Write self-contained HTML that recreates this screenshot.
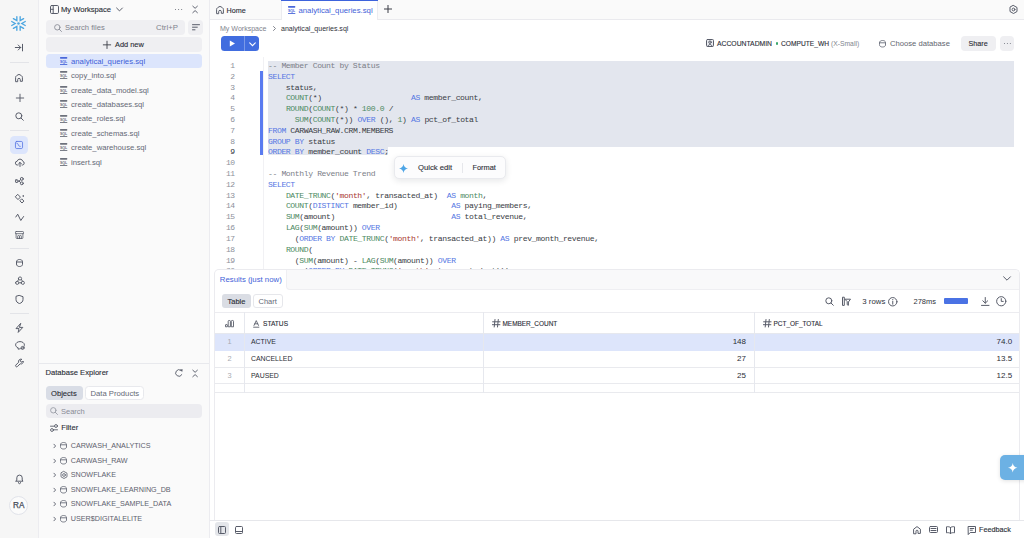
<!DOCTYPE html>
<html><head><meta charset="utf-8">
<style>
*{box-sizing:border-box;margin:0;padding:0}
html,body{width:1024px;height:538px;overflow:hidden;background:#fff;font-family:"Liberation Sans",sans-serif;color:#1e2129}
.a{position:absolute}
svg{display:block;overflow:visible}
.ic{stroke:#595d6a;fill:none;stroke-width:1;stroke-linecap:round;stroke-linejoin:round}
.t{position:absolute;white-space:nowrap;line-height:10px;height:10px;}
.u{transform:scaleY(1.05)}
.md{-webkit-text-stroke:0.12px currentColor}
#rail{left:0;top:0;width:39px;height:538px;background:#f6f6f6;border-right:1px solid #ececf0}
#side{left:39px;top:0;width:171px;height:538px;background:#fafafa;border-right:1px solid #ececf0}
.div{position:absolute;left:10px;width:19px;height:1px;background:#e3e4e8}
.fr{position:absolute;left:46px;width:156px;height:14px}
.fr .t{left:25px;top:2.8px;font-size:7.7px;color:#646875}
.sqlic{position:absolute;left:13.9px;top:3px;width:8px;height:8px}
.tree .t{font-size:7.2px;color:#5d616d}
.code{position:absolute;left:268px;font-family:"Liberation Mono",monospace;font-size:8.1px;letter-spacing:-0.39px;white-space:pre;color:#393c44;line-height:10.82px}
.ln{position:absolute;left:210.5px;width:24px;text-align:right;font-family:"Liberation Mono",monospace;font-size:8px;letter-spacing:-0.5px;color:#8d909a;line-height:10.82px;white-space:pre}
.k{color:#5577e3}.f{color:#4c8a62}.s{color:#a8372f}.c{color:#7b7e87}.n{color:#4c8a62}
</style></head>
<body>
<!-- LEFT RAIL -->
<div id="rail" class="a">
  <!-- snowflake -->
  <svg class="a" style="left:11.3px;top:16.4px" width="15" height="15" viewBox="0 0 15 15"><path d="M14.26 5.50L10.80 7.50L14.26 9.50M9.15 0.64L9.15 4.64L12.61 2.64M2.39 2.64L5.85 4.64L5.85 0.64M0.74 9.50L4.20 7.50L0.74 5.50M5.85 14.36L5.85 10.36L2.39 12.36M12.61 12.36L9.15 10.36L9.15 14.36" stroke="#4ca6e0" stroke-width="1.35" fill="none" stroke-linecap="round" stroke-linejoin="miter"/><circle cx="7.5" cy="7.5" r="1.3" fill="#4ca6e0"/></svg>
  <!-- collapse -->
  <svg class="a ic" style="left:15px;top:44px" width="8" height="7" viewBox="0 0 8 7"><path d="M0.3 3.5h5.4M3.2 1l2.5 2.5-2.5 2.5M7.5 0.3v6.6"/></svg>
  <div class="div" style="top:62px"></div>
  <svg class="a ic" style="left:15px;top:73.5px" width="8" height="8" viewBox="0 0 8 8"><path d="M0.6 7.3V3.4C0.6 2.7 0.9 2.2 1.5 1.8L3 0.8a1.8 1.8 0 0 1 2 0l1.5 1C7.1 2.2 7.4 2.7 7.4 3.4v3.9H5.3V5.6a1.3 1.3 0 0 0-2.6 0v1.7z"/></svg>
  <svg class="a ic" style="left:15.5px;top:93.5px" width="8" height="8" viewBox="0 0 8 8"><path d="M4 0.2v7.4M0.3 4h7.4" style="stroke-width:0.95"/></svg>
  <svg class="a ic" style="left:15px;top:112px" width="9" height="9" viewBox="0 0 9 9"><circle cx="3.8" cy="3.8" r="3"/><path d="M6 6l2.3 2.3"/></svg>
  <div class="div" style="top:130px"></div>
  <div class="a" style="left:9.8px;top:135.8px;width:18.2px;height:17.8px;border-radius:4.5px;background:#dce5fc"></div>
  <svg class="a" style="left:15px;top:141px" width="8" height="8" viewBox="0 0 8 8"><g stroke="#5b78e4" fill="none" stroke-width="0.85" stroke-linecap="round"><rect x="0.45" y="0.45" width="7.1" height="7.1" rx="1.3"/><path d="M1.8 2.2C2.6 2.4 3 2.8 3.3 3.8 3.6 4.8 4 5.3 5.2 5.4"/></g></svg>
  <svg class="a ic" style="left:14.5px;top:158px" width="10" height="9" viewBox="0 0 10 9"><path d="M3 7H2.4A1.9 1.9 0 0 1 2.2 3.2 2.9 2.9 0 0 1 7.8 3.3 1.9 1.9 0 0 1 7.6 7H7M5 8.5V4.5M3.6 5.8L5 4.4l1.4 1.4"/></svg>
  <svg class="a ic" style="left:15px;top:176.6px" width="9" height="8.5" viewBox="0 0 9 8.5"><rect x="0.5" y="2.9" width="2.4" height="2.5" rx="0.5"/><circle cx="6.8" cy="1.9" r="1.45"/><circle cx="6.8" cy="6.3" r="1.45"/><path d="M2.9 4.15h1.2l1.4-1.5M4.1 4.15l1.4 1.4"/></svg>
  <svg class="a ic" style="left:14.5px;top:194px" width="10" height="10" viewBox="0 0 10 10"><path d="M3 0.6L5.4 3.1 3 5.6 0.6 3.1z M7 5.1L8.9 7.05 7 9 5.1 7.05z"/><circle cx="8.1" cy="2" r="0.3"/></svg>
  <svg class="a ic" style="left:14.5px;top:213px" width="10" height="9" viewBox="0 0 10 9"><path d="M0.8 4L2.7 1.2 5.8 7.5 8.6 3.5"/></svg>
  <svg class="a ic" style="left:15px;top:230.5px" width="9" height="8" viewBox="0 0 9 8"><path d="M1.2 0.5h6.6a0.7 0.7 0 0 1 .7.7v1.5H0.5V1.2a0.7 0.7 0 0 1 .7-.7z M1.1 2.7v4.1a0.7 0.7 0 0 0 .7.7h5.4a0.7 0.7 0 0 0 .7-.7V2.7 M2.6 7.4V5.4a0.9 0.9 0 0 1 1.8 0v2 M4.6 7.4V5.4a0.9 0.9 0 0 1 1.8 0v2" style="stroke-width:0.8"/></svg>
  <div class="div" style="top:248px"></div>
  <svg class="a ic" style="left:15.7px;top:259.2px" width="7" height="8" viewBox="0 0 7 8"><path d="M0.5 2.6C0.5 1.3 1.8 0.5 3.5 0.5S6.5 1.3 6.5 2.6V5.4C6.5 6.7 5.2 7.5 3.5 7.5S0.5 6.7 0.5 5.4z M0.5 3h6"/></svg>
  <svg class="a ic" style="left:14.6px;top:276.3px" width="10" height="9" viewBox="0 0 10 9"><path d="M3.4 2.5A1.6 1.6 0 1 1 6.6 2.5 1.6 1.6 0 1 1 3.4 2.5z M0.6 6.8A1.6 1.6 0 1 1 3.8 6.8 1.6 1.6 0 1 1 0.6 6.8z M6.2 6.8A1.6 1.6 0 1 1 9.4 6.8 1.6 1.6 0 1 1 6.2 6.8z M3.8 6.8h2.4M3.6 3.4L2.6 5.3M6.4 3.4l1 1.9" style="stroke-width:0.9"/></svg>
  <svg class="a ic" style="left:15px;top:295px" width="9" height="9" viewBox="0 0 9 9"><path d="M4.5 0.5L8 1.7v2.8c0 2.1-1.5 3.5-3.5 4C2.5 8 1 6.6 1 4.5V1.7z"/></svg>
  <div class="div" style="top:313px"></div>
  <svg class="a ic" style="left:15px;top:322.8px" width="9" height="10" viewBox="0 0 9 10"><path d="M5.5 0.6L1 5.6h3l-0.8 3.8 4.6-5H4.8z"/></svg>
  <svg class="a ic" style="left:14.5px;top:341px" width="10" height="9" viewBox="0 0 10 9"><path d="M5.3 7.6C4.6 8 3.8 8.2 3 8.1L3.2 6.8C1.6 6.3.6 5.2.6 3.9.6 2 2.6.6 5 .6S9.4 2 9.4 3.9c0 .4-.1.8-.2 1.1"/><circle cx="7.6" cy="6.9" r="1.5"/><path d="M6.6 7.9l2-2"/></svg>
  <svg class="a ic" style="left:14.5px;top:358px" width="10" height="10" viewBox="0 0 10 10"><path d="M6.5 1.2a2.3 2.3 0 0 0-2.8 3L0.9 7a1 1 0 0 0 1.5 1.5L5.2 5.8a2.3 2.3 0 0 0 3-2.8L7 4.2 5.8 3.8 5.4 2.6z"/></svg>
  <svg class="a ic" style="left:15px;top:474px" width="9" height="10" viewBox="0 0 9 10"><path d="M1 7.2h7L7.2 6V3.8a2.7 2.7 0 0 0-5.4 0V6z M3.4 8.6a1.1 1.1 0 0 0 2.2 0"/></svg>
  <div class="a" style="left:9.2px;top:496px;width:19px;height:19px;border-radius:50%;border:1px solid #e1e3ea;background:#fbfbfb"></div>
  <div class="t md" style="left:9.2px;width:19px;top:500.5px;text-align:center;font-size:8.2px;color:#454a58;-webkit-text-stroke:0.25px #454a58">RA</div>
</div>

<!-- SIDEBAR -->
<div id="side" class="a"></div>
<svg class="a ic" style="left:49.5px;top:5px" width="9" height="9" viewBox="0 0 9 9"><rect x="0.5" y="0.5" width="8" height="8" rx="1.2"/><path d="M3.2 0.5v8M0.6 4.3h2.6"/></svg>
<div class="t md" style="left:61px;top:5px;font-size:7.6px;color:#2b2e37">My Workspace</div>
<svg class="a ic" style="left:116px;top:6.5px" width="7" height="5" viewBox="0 0 7 5"><path d="M0.6 1l2.9 2.9L6.4 1"/></svg>
<div class="a" style="left:174.7px;top:8.8px;width:1.35px;height:1.35px;border-radius:50%;background:#5a5e68;box-shadow:3.1px 0 #5a5e68,6.2px 0 #5a5e68"></div>
<svg class="a ic" style="left:192.3px;top:5px" width="6" height="9" viewBox="0 0 6 9"><path d="M0.8 1.2l2.3 2.1 2.3-2.1M0.8 7.7l2.3-2.1 2.3 2.1" style="stroke-width:0.95"/></svg>

<div class="a" style="left:46px;top:20px;width:139px;height:14.5px;border-radius:4px;background:#efeff2"></div>
<svg class="a" style="left:54px;top:23.5px" width="8" height="8" viewBox="0 0 8 8"><g stroke="#8b8e98" fill="none" stroke-width="0.9" stroke-linecap="round"><circle cx="3.3" cy="3.3" r="2.7"/><path d="M5.3 5.3L7.5 7.5"/></g></svg>
<div class="t" style="left:65px;top:23px;font-size:7.6px;color:#80838d">Search files</div>
<div class="t" style="left:156px;top:23px;font-size:7.8px;color:#80838d">Ctrl+P</div>
<div class="a" style="left:188px;top:20px;width:14.5px;height:14.5px;border-radius:4px;background:#efeff2"></div>
<svg class="a ic" style="left:191.5px;top:24px" width="8" height="7" viewBox="0 0 8 7"><path d="M0.5 0.7h7M0.5 3.2h4.8M0.5 5.8h2.5"/></svg>

<div class="a" style="left:46px;top:37px;width:156px;height:14.5px;border-radius:4px;background:#efeff2"></div>
<svg class="a" style="left:103px;top:40.5px" width="8" height="8" viewBox="0 0 8 8"><g stroke="#3a3d46" stroke-width="0.9" stroke-linecap="round"><path d="M4 0.2v7.3M0.3 3.85h7.4"/></g></svg>
<div class="t md" style="left:115px;top:40px;font-size:7.4px;color:#2b2e37">Add new</div>

<div class="fr" style="top:54px;background:#dce5fc;border-radius:3.5px"><svg class="sqlic" viewBox="0 0 8 8"><rect x="0" y="0" width="7.3" height="1.7" rx="0.6" fill="#4a68da"/><rect x="0" y="7.0" width="7.3" height="0.9" fill="#4a68da"/><text x="3.65" y="5.8" text-anchor="middle" font-size="3.7" font-family="Liberation Sans" font-weight="700" fill="#4a68da" textLength="7.3" lengthAdjust="spacingAndGlyphs">SQL</text></svg><div class="t" style="color:#3f5fd8;font-size:7.75px">analytical_queries.sql</div></div>
<div class="fr" style="top:68.4px"><svg class="sqlic" viewBox="0 0 8 8"><rect x="0" y="0" width="7.3" height="1.7" rx="0.6" fill="#6d717c"/><rect x="0" y="7.0" width="7.3" height="0.9" fill="#6d717c"/><text x="3.65" y="5.8" text-anchor="middle" font-size="3.7" font-family="Liberation Sans" font-weight="700" fill="#6d717c" textLength="7.3" lengthAdjust="spacingAndGlyphs">SQL</text></svg><div class="t">copy_into.sql</div></div>
<div class="fr" style="top:82.8px"><svg class="sqlic" viewBox="0 0 8 8"><rect x="0" y="0" width="7.3" height="1.7" rx="0.6" fill="#6d717c"/><rect x="0" y="7.0" width="7.3" height="0.9" fill="#6d717c"/><text x="3.65" y="5.8" text-anchor="middle" font-size="3.7" font-family="Liberation Sans" font-weight="700" fill="#6d717c" textLength="7.3" lengthAdjust="spacingAndGlyphs">SQL</text></svg><div class="t">create_data_model.sql</div></div>
<div class="fr" style="top:97.2px"><svg class="sqlic" viewBox="0 0 8 8"><rect x="0" y="0" width="7.3" height="1.7" rx="0.6" fill="#6d717c"/><rect x="0" y="7.0" width="7.3" height="0.9" fill="#6d717c"/><text x="3.65" y="5.8" text-anchor="middle" font-size="3.7" font-family="Liberation Sans" font-weight="700" fill="#6d717c" textLength="7.3" lengthAdjust="spacingAndGlyphs">SQL</text></svg><div class="t">create_databases.sql</div></div>
<div class="fr" style="top:111.6px"><svg class="sqlic" viewBox="0 0 8 8"><rect x="0" y="0" width="7.3" height="1.7" rx="0.6" fill="#6d717c"/><rect x="0" y="7.0" width="7.3" height="0.9" fill="#6d717c"/><text x="3.65" y="5.8" text-anchor="middle" font-size="3.7" font-family="Liberation Sans" font-weight="700" fill="#6d717c" textLength="7.3" lengthAdjust="spacingAndGlyphs">SQL</text></svg><div class="t">create_roles.sql</div></div>
<div class="fr" style="top:126px"><svg class="sqlic" viewBox="0 0 8 8"><rect x="0" y="0" width="7.3" height="1.7" rx="0.6" fill="#6d717c"/><rect x="0" y="7.0" width="7.3" height="0.9" fill="#6d717c"/><text x="3.65" y="5.8" text-anchor="middle" font-size="3.7" font-family="Liberation Sans" font-weight="700" fill="#6d717c" textLength="7.3" lengthAdjust="spacingAndGlyphs">SQL</text></svg><div class="t">create_schemas.sql</div></div>
<div class="fr" style="top:140.4px"><svg class="sqlic" viewBox="0 0 8 8"><rect x="0" y="0" width="7.3" height="1.7" rx="0.6" fill="#6d717c"/><rect x="0" y="7.0" width="7.3" height="0.9" fill="#6d717c"/><text x="3.65" y="5.8" text-anchor="middle" font-size="3.7" font-family="Liberation Sans" font-weight="700" fill="#6d717c" textLength="7.3" lengthAdjust="spacingAndGlyphs">SQL</text></svg><div class="t">create_warehouse.sql</div></div>
<div class="fr" style="top:154.8px"><svg class="sqlic" viewBox="0 0 8 8"><rect x="0" y="0" width="7.3" height="1.7" rx="0.6" fill="#6d717c"/><rect x="0" y="7.0" width="7.3" height="0.9" fill="#6d717c"/><text x="3.65" y="5.8" text-anchor="middle" font-size="3.7" font-family="Liberation Sans" font-weight="700" fill="#6d717c" textLength="7.3" lengthAdjust="spacingAndGlyphs">SQL</text></svg><div class="t">insert.sql</div></div>

<!-- DATABASE EXPLORER -->
<div class="a" style="left:39px;top:363px;width:170px;height:1px;background:#e8e9ed"></div>
<div class="t md" style="left:45.5px;top:368px;font-size:7.6px;color:#2b2e37">Database Explorer</div>
<svg class="a ic" style="left:174.6px;top:369px" width="8" height="8" viewBox="0 0 8 8"><path d="M6.86 5.65A3.3 3.3 0 1 1 5.9 1.3" style="stroke-width:0.95"/><path d="M4.9 0.6L7.7 0.3 7.2 3z" style="fill:#595d6a;stroke:none"/></svg>
<svg class="a ic" style="left:192.3px;top:368.5px" width="6" height="9" viewBox="0 0 6 9"><path d="M0.8 1.2l2.3 2.1 2.3-2.1M0.8 7.7l2.3-2.1 2.3 2.1" style="stroke-width:0.95"/></svg>
<div class="a" style="left:46px;top:386px;width:36.5px;height:14px;border-radius:3.5px;background:#d9dde6"></div>
<div class="t md" style="left:51px;top:388.5px;font-size:7.6px;color:#2b2e37">Objects</div>
<div class="a" style="left:84.8px;top:386px;width:59.4px;height:14px;border-radius:3.5px;background:#fff;border:1px solid #e8e9ed"></div>
<div class="t" style="left:90.5px;top:388.5px;font-size:7.7px;color:#656976">Data Products</div>
<div class="a" style="left:46px;top:404px;width:156px;height:14px;border-radius:4px;background:#ececf0"></div>
<svg class="a" style="left:50px;top:407px" width="8" height="8" viewBox="0 0 8 8"><g stroke="#9a9da6" fill="none" stroke-width="0.9" stroke-linecap="round"><circle cx="3.3" cy="3.3" r="2.7"/><path d="M5.3 5.3L7.5 7.5"/></g></svg>
<div class="t" style="left:61px;top:406.5px;font-size:7.5px;color:#8a8d97">Search</div>
<svg class="a ic" style="left:50px;top:424px" width="8" height="8" viewBox="0 0 8 8"><path d="M0.5 2.2h3.8M3.8 5.8h3.7" style="stroke-width:0.9"/><circle cx="6" cy="2" r="1.45" style="stroke-width:0.9"/><circle cx="2" cy="6" r="1.45" style="stroke-width:0.9"/></svg>
<div class="t md" style="left:61.3px;top:423.2px;font-size:7.6px;color:#2b2e37">Filter</div>

<div class="tree">
<svg class="a ic" style="left:52.5px;top:443px" width="4" height="6" viewBox="0 0 4 6"><path d="M0.9 1.2l1.7 1.8-1.7 1.8" stroke="#6a6e7a"/></svg>
<svg class="a ic" style="left:60px;top:442.1px;stroke:#6a6e7a;stroke-width:0.9" width="7" height="7.5" viewBox="0 0 7 7.5"><path d="M0.5 2.5C0.5 1.2 1.8 0.5 3.5 0.5S6.5 1.2 6.5 2.5V5C6.5 6.3 5.2 7 3.5 7S0.5 6.3 0.5 5z M0.5 2.8h6"/></svg>
<div class="t" style="left:70.8px;top:441px">CARWASH_ANALYTICS</div>
<svg class="a ic" style="left:52.5px;top:457.5px" width="4" height="6" viewBox="0 0 4 6"><path d="M0.9 1.2l1.7 1.8-1.7 1.8" stroke="#6a6e7a"/></svg>
<svg class="a ic" style="left:60px;top:456.6px;stroke:#6a6e7a;stroke-width:0.9" width="7" height="7.5" viewBox="0 0 7 7.5"><path d="M0.5 2.5C0.5 1.2 1.8 0.5 3.5 0.5S6.5 1.2 6.5 2.5V5C6.5 6.3 5.2 7 3.5 7S0.5 6.3 0.5 5z M0.5 2.8h6"/></svg>
<div class="t" style="left:70.8px;top:455.5px">CARWASH_RAW</div>
<svg class="a ic" style="left:52.5px;top:472px" width="4" height="6" viewBox="0 0 4 6"><path d="M0.9 1.2l1.7 1.8-1.7 1.8" stroke="#6a6e7a"/></svg>
<svg class="a ic" style="left:60px;top:470.5px;stroke:#6a6e7a;stroke-width:0.9" width="8" height="8" viewBox="0 0 8 8"><path d="M4 0.5L7 2.2V5.8L4 7.5 1 5.8V2.2z"/><circle cx="4" cy="4" r="1.4"/></svg>
<div class="t" style="left:70.8px;top:470px">SNOWFLAKE</div>
<svg class="a ic" style="left:52.5px;top:486.5px" width="4" height="6" viewBox="0 0 4 6"><path d="M0.9 1.2l1.7 1.8-1.7 1.8" stroke="#6a6e7a"/></svg>
<svg class="a ic" style="left:60px;top:485.6px;stroke:#6a6e7a;stroke-width:0.9" width="7" height="7.5" viewBox="0 0 7 7.5"><path d="M0.5 2.5C0.5 1.2 1.8 0.5 3.5 0.5S6.5 1.2 6.5 2.5V5C6.5 6.3 5.2 7 3.5 7S0.5 6.3 0.5 5z M0.5 2.8h6"/></svg>
<div class="t" style="left:70.8px;top:484.5px">SNOWFLAKE_LEARNING_DB</div>
<svg class="a ic" style="left:52.5px;top:501px" width="4" height="6" viewBox="0 0 4 6"><path d="M0.9 1.2l1.7 1.8-1.7 1.8" stroke="#6a6e7a"/></svg>
<svg class="a ic" style="left:60px;top:500.1px;stroke:#6a6e7a;stroke-width:0.9" width="7" height="7.5" viewBox="0 0 7 7.5"><path d="M0.5 2.5C0.5 1.2 1.8 0.5 3.5 0.5S6.5 1.2 6.5 2.5V5C6.5 6.3 5.2 7 3.5 7S0.5 6.3 0.5 5z M0.5 2.8h6"/></svg>
<div class="t" style="left:70.8px;top:499px">SNOWFLAKE_SAMPLE_DATA</div>
<svg class="a ic" style="left:52.5px;top:515.5px" width="4" height="6" viewBox="0 0 4 6"><path d="M0.9 1.2l1.7 1.8-1.7 1.8" stroke="#6a6e7a"/></svg>
<svg class="a ic" style="left:60px;top:514.6px;stroke:#6a6e7a;stroke-width:0.9" width="7" height="7.5" viewBox="0 0 7 7.5"><path d="M0.5 2.5C0.5 1.2 1.8 0.5 3.5 0.5S6.5 1.2 6.5 2.5V5C6.5 6.3 5.2 7 3.5 7S0.5 6.3 0.5 5z M0.5 2.8h6"/></svg>
<div class="t" style="left:70.8px;top:513.5px">USER$DIGITALELITE</div>
</div>

<!-- MAIN -->
<!-- TABBAR -->
<div class="a" style="left:210px;top:0;width:814px;height:20px;background:#fafafa;border-bottom:1px solid #eaeaee"></div>
<svg class="a ic" style="left:215.5px;top:6px" width="8" height="8" viewBox="0 0 8 8"><path d="M0.6 7.3V3.4C0.6 2.7 0.9 2.2 1.5 1.8L3 0.8a1.8 1.8 0 0 1 2 0l1.5 1C7.1 2.2 7.4 2.7 7.4 3.4v3.9H5.3V5.6a1.3 1.3 0 0 0-2.6 0v1.7z"/></svg>
<div class="t md" style="left:226.5px;top:5.7px;font-size:7.2px;color:#2b2e37">Home</div>
<div class="a" style="left:281px;top:0;width:97px;height:20px;background:#fff;border-left:1px solid #ececf0;border-right:1px solid #ececf0"></div>
<div class="a" style="left:281px;top:0;width:97px;height:1.2px;background:#3d63dc"></div>
<svg class="a" style="left:287.5px;top:6px" width="8" height="8" viewBox="0 0 8 8"><rect x="0" y="0" width="7.3" height="1.7" rx="0.6" fill="#4a68da"/><rect x="0" y="7.0" width="7.3" height="0.9" fill="#4a68da"/><text x="3.65" y="5.8" text-anchor="middle" font-size="3.7" font-family="Liberation Sans" font-weight="700" fill="#4a68da" textLength="7.3" lengthAdjust="spacingAndGlyphs">SQL</text></svg>
<div class="t" style="left:298.5px;top:5.9px;font-size:7.75px;color:#3f5fd8">analytical_queries.sql</div>
<svg class="a ic" style="left:383.5px;top:5px" width="8" height="8" viewBox="0 0 8 8"><path d="M4 0.4v7.2M0.4 4h7.2" stroke="#3a3d46"/></svg>
<svg class="a ic" style="left:1008.5px;top:5px" width="9" height="9" viewBox="0 0 9 9"><path d="M4.5 0.5l3.5 2v4l-3.5 2-3.5-2v-4z"/><circle cx="4.5" cy="4.5" r="1.4"/></svg>

<!-- breadcrumb -->
<div class="t" style="left:220px;top:23.5px;font-size:7.05px;color:#80838d">My Workspace</div>
<svg class="a ic" style="left:273px;top:25.5px" width="3" height="5" viewBox="0 0 3 5"><path d="M0.5 0.5l2 2-2 2" stroke="#80838d"/></svg>
<div class="t" style="left:281px;top:23.5px;font-size:7.05px;color:#2f323a">analytical_queries.sql</div>

<!-- run button -->
<div class="a" style="left:220.6px;top:36.1px;width:38.5px;height:14.7px;border-radius:3.5px;background:#416ddf"></div>
<div class="a" style="left:244px;top:36.1px;width:0.7px;height:14.7px;background:rgba(255,255,255,0.3)"></div>
<svg class="a" style="left:229.2px;top:40.1px" width="7" height="7" viewBox="0 0 7 7"><path d="M0.8 0.4L6 3.45 0.8 6.5z" fill="#fff"/></svg>
<svg class="a" style="left:249px;top:41.5px" width="7" height="5" viewBox="0 0 7 5"><path d="M0.7 0.8l2.8 2.8 2.8-2.8" stroke="#fff" fill="none" stroke-width="1.1" stroke-linecap="round"/></svg>

<!-- right toolbar -->
<svg class="a ic" style="left:705.8px;top:39.4px" width="8" height="8" viewBox="0 0 8 8"><rect x="0.5" y="0.5" width="7" height="7" rx="1" style="fill:#eceef2"/><circle cx="4" cy="3.2" r="1.25"/><path d="M1.9 7.4c.3-1.3 1-1.9 2.1-1.9s1.8.6 2.1 1.9"/></svg>
<div class="t md" style="left:717px;top:39px;font-size:6.8px;color:#2b2e37">ACCOUNTADMIN</div>
<div class="a" style="left:776.3px;top:42.4px;width:2.2px;height:2.2px;border-radius:50%;background:#3aa76d"></div>
<div class="t md" style="left:781px;top:39px;font-size:6.65px;color:#2b2e37">COMPUTE_WH</div>
<div class="t" style="left:831px;top:39px;font-size:6.75px;color:#80838d">(X-Small)</div>
<svg class="a ic" style="left:879px;top:39.6px;stroke:#6a6e7a;stroke-width:0.9" width="7" height="7.5" viewBox="0 0 7 7.5"><path d="M0.5 2.5C0.5 1.2 1.8 0.5 3.5 0.5S6.5 1.2 6.5 2.5V5C6.5 6.3 5.2 7 3.5 7S0.5 6.3 0.5 5z M0.5 2.8h6"/></svg>
<div class="t" style="left:890px;top:39px;font-size:7.65px;color:#62666f">Choose database</div>
<div class="a" style="left:961px;top:36.4px;width:35px;height:14.2px;border-radius:4px;background:#efeff2"></div>
<div class="t md" style="left:968.5px;top:39px;font-size:7.2px;color:#2b2e37">Share</div>
<div class="a" style="left:999.5px;top:36.4px;width:14.5px;height:14.2px;border-radius:4px;background:#efeff2"></div>
<div class="a" style="left:1003.5px;top:43px;width:1.3px;height:1.3px;border-radius:50%;background:#6a6e78;box-shadow:2.9px 0 #6a6e78,5.8px 0 #6a6e78"></div>

<!-- EDITOR -->
<div class="a" style="left:262.5px;top:57px;width:0.6px;height:212px;background:#f1f1f4"></div>
<div class="a" style="left:268px;top:60.8px;width:746px;height:86.4px;background:#e3e6ee"></div>
<div class="a" style="left:268px;top:147px;width:120.2px;height:8px;background:#e3e6ee"></div>
<div class="a" style="left:260.2px;top:71px;width:2.8px;height:84.2px;background:#5a7bf0"></div>

<div class="ln" style="top:60.9px">1
2
3
4
5
6
7
8
<span style="color:#30333b">9</span>
10
11
12
13
14
15
16
17
18
19
20</div>

<div class="code" style="top:60.9px"><span class="c">-- Member Count by Status</span>
<span class="k">SELECT</span>
    status,
    <span class="f">COUNT</span>(*)                    <span class="k">AS</span> member_count,
    <span class="f">ROUND</span>(<span class="f">COUNT</span>(*) * <span class="n">100.0</span> /
      <span class="f">SUM</span>(<span class="f">COUNT</span>(*)) <span class="k">OVER</span> (), <span class="n">1</span>) <span class="k">AS</span> pct_of_total
<span class="k">FROM</span> CARWASH_RAW.CRM.MEMBERS
<span class="k">GROUP BY</span> status
<span class="k">ORDER BY</span> member_count <span class="k">DESC</span>;

<span class="c">-- Monthly Revenue Trend</span>
<span class="k">SELECT</span>
    <span class="f">DATE_TRUNC</span>(<span class="s">'month'</span>, transacted_at)  <span class="k">AS</span> <span class="f">month</span>,
    <span class="f">COUNT</span>(<span class="k">DISTINCT</span> member_id)            <span class="k">AS</span> paying_members,
    <span class="f">SUM</span>(amount)                          <span class="k">AS</span> total_revenue,
    <span class="f">LAG</span>(<span class="f">SUM</span>(amount)) <span class="k">OVER</span>
      (<span class="k">ORDER BY</span> <span class="f">DATE_TRUNC</span>(<span class="s">'month'</span>, transacted_at)) <span class="k">AS</span> prev_month_revenue,
    <span class="f">ROUND</span>(
      (<span class="f">SUM</span>(amount) - <span class="f">LAG</span>(<span class="f">SUM</span>(amount)) <span class="k">OVER</span>
        (<span class="k">ORDER BY</span> <span class="f">DATE_TRUNC</span>(<span class="s">'month'</span>, transacted_at)))</div>

<!-- Quick edit popup -->
<div class="a" style="left:393.5px;top:156px;width:112.5px;height:23.2px;border-radius:5px;background:#fcfcfd;border:0.6px solid #e9eaee;box-shadow:0 2px 6px rgba(20,25,40,0.10)"></div>
<svg class="a" style="left:399px;top:163.5px" width="9" height="9" viewBox="0 0 9 9"><path d="M4.5 0C4.9 2.7 6.3 4.1 9 4.5 6.3 4.9 4.9 6.3 4.5 9 4.1 6.3 2.7 4.9 0 4.5 2.7 4.1 4.1 2.7 4.5 0z" fill="#4ea5e6"/></svg>
<div class="t md" style="left:418px;top:163px;font-size:7.7px;color:#2f323a">Quick edit</div>
<div class="a" style="left:462.2px;top:163px;width:0.7px;height:9.5px;background:#e6e7eb"></div>
<div class="t md" style="left:472.5px;top:163px;font-size:7.4px;color:#2f323a">Format</div>

<!-- RESULTS PANEL -->
<div class="a" style="left:214px;top:269.4px;width:806px;height:251px;background:#fff;border:1px solid #ebebef;border-bottom:none;border-radius:5px 5px 0 0;overflow:hidden">
  <div class="a" style="left:71px;top:-1px;width:740px;height:21px;background:#f9f9fa;border-bottom:1px solid #efeff2;border-left:1px solid #efeff2;border-bottom-left-radius:4px"></div>
</div>
<div class="t" style="left:219.8px;top:274.5px;font-size:7.8px;color:#3f5fd8">Results (just now)</div>
<svg class="a ic" style="left:1003px;top:276px" width="8" height="5" viewBox="0 0 8 5"><path d="M0.6 0.8l3.4 3.4 3.4-3.4"/></svg>

<div class="a" style="left:222.3px;top:294px;width:28.5px;height:14px;border-radius:3px;background:#dadde4"></div>
<div class="t md" style="left:227.5px;top:296.5px;font-size:7.5px;color:#2b2e37">Table</div>
<div class="a" style="left:253.3px;top:294px;width:30px;height:14px;border-radius:3px;background:#fff;border:1px solid #e6e7eb"></div>
<div class="t" style="left:258.5px;top:296.5px;font-size:7.5px;color:#656976">Chart</div>

<svg class="a ic" style="left:824.5px;top:296.5px" width="9" height="9" viewBox="0 0 9 9"><circle cx="3.8" cy="3.8" r="3"/><path d="M6 6l2.3 2.3"/></svg>
<svg class="a ic" style="left:841.5px;top:296.5px" width="9" height="9" viewBox="0 0 9 9"><path d="M0.5 0.6v7.8h1.8V0.6zM3.2 2.2h5.3L6.4 5v3.3L5.2 7.7V5z"/></svg>
<div class="t" style="left:862.3px;top:296.5px;font-size:7.85px;color:#30333b">3 rows</div>
<svg class="a ic" style="left:888px;top:296.5px" width="9.5" height="9.5" viewBox="0 0 9.5 9.5"><circle cx="4.75" cy="4.75" r="4.2"/><path d="M4.75 4.2v3M4.75 2.5v0.2"/></svg>
<div class="t" style="left:913.5px;top:296.5px;font-size:7.5px;color:#30333b">278ms</div>
<div class="a" style="left:943.6px;top:297.9px;width:24.7px;height:6px;border-radius:1px;background:#4a72e4"></div>
<svg class="a ic" style="left:980.5px;top:296.5px" width="8.5" height="9" viewBox="0 0 8.5 9"><path d="M4.25 0.5v5.5M1.8 3.8l2.45 2.4 2.45-2.4M0.5 8.4h7.5"/></svg>
<svg class="a ic" style="left:996px;top:296px" width="10.5" height="10.5" viewBox="0 0 10.5 10.5"><circle cx="5.25" cy="5.25" r="4.6"/><path d="M5.25 2.6v2.8h2"/></svg>

<!-- table -->
<div class="a" style="left:215px;top:312px;width:804px;height:1px;background:#ececf0"></div>
<div class="a" style="left:215px;top:333px;width:804px;height:17.8px;background:#dde5fb"></div>
<div class="a" style="left:215px;top:332.6px;width:804px;height:0.8px;background:#e6e8ee"></div>
<div class="a" style="left:215px;top:367px;width:804px;height:0.8px;background:#e9eaee"></div>
<div class="a" style="left:215px;top:383.2px;width:804px;height:0.8px;background:#e9eaee"></div>
<div class="a" style="left:215px;top:392.2px;width:804px;height:0.8px;background:#e9eaee"></div>
<div class="a" style="left:243.8px;top:312px;width:0.8px;height:80.5px;background:#e6e8ee"></div>
<div class="a" style="left:483px;top:312px;width:0.8px;height:80.5px;background:#e6e8ee"></div>
<div class="a" style="left:754px;top:312px;width:0.8px;height:80.5px;background:#e6e8ee"></div>

<svg class="a ic" style="left:225px;top:320px" width="9.5" height="7" viewBox="0 0 9.5 7"><path d="M0.5 6.4V5a0.5 0.5 0 0 1 .5-.5h.8a0.5 0.5 0 0 1 .5.5v1.4z M3.2 6.4V1.3a0.8 0.8 0 0 1 .8-.8h.6a0.8 0.8 0 0 1 .8.8v5.1z M6.3 6.4V1.3a0.8 0.8 0 0 1 .8-.8h.6a0.8 0.8 0 0 1 .8.8v5.1z" style="stroke-width:0.9"/></svg>
<svg class="a ic" style="left:253px;top:319.5px" width="6.5" height="8" viewBox="0 0 6.5 8"><path d="M1 5.4L3.25 0.6l2.25 4.8M1.8 3.8h2.9M0.6 7.2h5.3" style="stroke-width:0.9"/></svg>
<div class="t md" style="left:263px;top:318.5px;font-size:6.6px;color:#2b2e37">STATUS</div>
<svg class="a ic" style="left:491.5px;top:318.5px" width="8.5" height="8.5" viewBox="0 0 8.5 8.5"><path d="M3 0.5l-0.8 7.5M6.3 0.5l-0.8 7.5M0.6 2.8h7.5M0.4 5.7h7.5"/></svg>
<div class="t md" style="left:502.5px;top:318.5px;font-size:6.45px;color:#2b2e37">MEMBER_COUNT</div>
<svg class="a ic" style="left:762.5px;top:318.5px" width="8.5" height="8.5" viewBox="0 0 8.5 8.5"><path d="M3 0.5l-0.8 7.5M6.3 0.5l-0.8 7.5M0.6 2.8h7.5M0.4 5.7h7.5"/></svg>
<div class="t md" style="left:773.5px;top:318.5px;font-size:6.45px;color:#2b2e37">PCT_OF_TOTAL</div>

<div class="t" style="left:215px;width:29px;text-align:center;top:336.5px;font-size:7.4px;color:#a7aab2">1</div>
<div class="t" style="left:215px;width:29px;text-align:center;top:353.5px;font-size:7.4px;color:#a7aab2">2</div>
<div class="t" style="left:215px;width:29px;text-align:center;top:370.8px;font-size:7.4px;color:#a7aab2">3</div>
<div class="t" style="left:251px;top:336.5px;font-size:6.9px;color:#2b2e37">ACTIVE</div>
<div class="t" style="left:251px;top:353.5px;font-size:6.9px;color:#2b2e37">CANCELLED</div>
<div class="t" style="left:251px;top:370.8px;font-size:6.9px;color:#2b2e37">PAUSED</div>
<div class="t" style="left:600px;width:146px;text-align:right;top:336.5px;font-size:8px;color:#2b2e37">148</div>
<div class="t" style="left:600px;width:146px;text-align:right;top:353.5px;font-size:8px;color:#2b2e37">27</div>
<div class="t" style="left:600px;width:146px;text-align:right;top:370.8px;font-size:8px;color:#2b2e37">25</div>
<div class="t" style="left:900px;width:112.2px;text-align:right;top:336.5px;font-size:8px;color:#2b2e37">74.0</div>
<div class="t" style="left:900px;width:112.2px;text-align:right;top:353.5px;font-size:8px;color:#2b2e37">13.5</div>
<div class="t" style="left:900px;width:112.2px;text-align:right;top:370.8px;font-size:8px;color:#2b2e37">12.5</div>

<!-- cortex button -->
<div class="a" style="left:1000px;top:455px;width:30px;height:24.7px;border-radius:5px;background:#6cb1e4;box-shadow:0 1px 4px rgba(0,0,0,0.12)"></div>
<svg class="a" style="left:1007.5px;top:463px" width="9.5" height="9.5" viewBox="0 0 9 9"><path d="M4.5 0C4.9 2.7 6.3 4.1 9 4.5 6.3 4.9 4.9 6.3 4.5 9 4.1 6.3 2.7 4.9 0 4.5 2.7 4.1 4.1 2.7 4.5 0z" fill="#fff"/></svg>

<!-- FOOTER -->
<div class="a" style="left:210px;top:520px;width:814px;height:18px;background:#fff;border-top:1px solid #e6e7eb"></div>
<div class="a" style="left:215px;top:522.3px;width:13.7px;height:14px;border-radius:3px;background:#e4e6ea"></div>
<svg class="a ic" style="left:218px;top:525.5px" width="8" height="8" viewBox="0 0 8 8"><rect x="0.5" y="0.5" width="7" height="7" rx="1"/><path d="M2.8 0.5v7"/></svg>
<svg class="a ic" style="left:234.5px;top:525.5px" width="8" height="8" viewBox="0 0 8 8"><rect x="0.5" y="0.5" width="7" height="7" rx="1"/><path d="M0.5 5.5h7"/></svg>
<svg class="a ic" style="left:913px;top:525.5px" width="8" height="8" viewBox="0 0 8 8"><path d="M0.6 7.4V3.2L4 0.6l3.4 2.6v4.2H5V5.2a1 1 0 0 0-2 0v2.2z"/></svg>
<svg class="a ic" style="left:929px;top:526px" width="9" height="7" viewBox="0 0 9 7"><rect x="0.5" y="0.5" width="8" height="6" rx="1"/><path d="M2 2.5h5M2 4.5h5"/></svg>
<svg class="a ic" style="left:945.5px;top:525.5px" width="9" height="8" viewBox="0 0 9 8"><path d="M4.5 1.5C3.5 0.7 2 0.5 0.5 0.8v6c1.5-.3 3-.1 4 .7 1-.8 2.5-1 4-.7v-6c-1.5-.3-3-.1-4 .7zM4.5 1.5v6"/></svg>
<svg class="a ic" style="left:968px;top:525.5px" width="8" height="9" viewBox="0 0 8 9"><path d="M0.5 0.5h7v6H2.2L0.5 8.3z M2.2 2.5h3.6M2.2 4.2h2.2"/></svg>
<div class="t md" style="left:979px;top:524.5px;font-size:7.25px;color:#2b2e37">Feedback</div>

</body></html>
